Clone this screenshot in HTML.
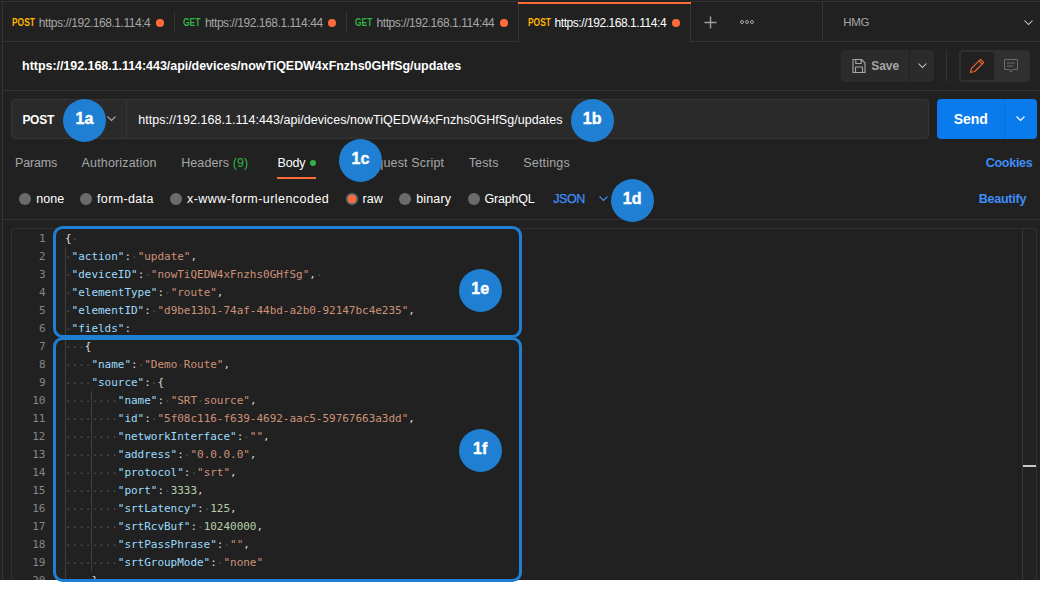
<!DOCTYPE html>
<html><head><meta charset="utf-8">
<style>
*{box-sizing:border-box;margin:0;padding:0}
html,body{width:1059px;height:600px;background:#fff;overflow:hidden}
body{font-family:"Liberation Sans",sans-serif;font-size:12px;color:#a6a6a6;position:relative}
#app{position:absolute;left:0;top:0;width:1040px;height:580px;background:#212121;overflow:hidden}
.abs{position:absolute}
.t{position:absolute;white-space:nowrap;line-height:16px}
.hl{position:absolute;height:1px;background:#343434}
.vl{position:absolute;width:1px;background:#343434}
/* tabs */
.tab{position:absolute;top:2px;height:39px}
.tab .m{position:absolute;top:14.5px;font-size:10px;font-weight:bold;line-height:12px;transform:scaleX(0.84);transform-origin:0 0}
.tab .u{position:absolute;top:13px;font-size:12px;line-height:16px;white-space:nowrap;letter-spacing:-0.45px}
.tab .d{position:absolute;top:17px;width:8px;height:8px;border-radius:50%;background:#ff6c37}
.post{color:#ffb400}.get{color:#2fb344}
.sep{position:absolute;top:11px;width:1px;height:21px;background:#343434}
.rt{font-size:12.5px;top:155px}
/* radios */
.r{position:absolute;top:193px;width:12px;height:12px;border-radius:50%;background:#6b6b6b}
.rl{position:absolute;top:191px;line-height:16px;color:#fff;font-size:12.5px;white-space:nowrap}
/* code */
#code{position:absolute;left:11px;top:228px;width:1026px;height:360px;border:1px solid #303030;border-radius:4px 4px 0 0;border-bottom:none}
.ln{position:absolute;left:0;top:0;width:33.5px;margin-top:1px;text-align:right;font:11px/18px "DejaVu Sans Mono","Liberation Mono",monospace;color:#858585}
.cl{position:absolute;left:53px;margin-top:1px;font:11px/18px "DejaVu Sans Mono","Liberation Mono",monospace;letter-spacing:-0.022px;color:#d4d4d4;white-space:pre}
.k{color:#9cdcfe}.s{color:#ce9178}.n{color:#b5cea8}.b{color:#dcdcdc}.w{color:#505050;position:relative;top:0.8px}
.box{position:absolute;border:3px solid #1f7fd3;border-radius:9.5px}
.c{position:absolute;width:43px;height:43px;border-radius:50%;background:#1f7fd3;color:#fff;font-weight:bold;font-size:16px;line-height:40.7px;text-align:center;-webkit-text-stroke:0.4px #fff}
</style></head><body>
<div id="app">
<!-- outer lines -->
<div class="hl" style="left:0;top:1px;width:1040px"></div>
<div class="vl" style="left:2px;top:2px;height:578px"></div>
<!-- tab bar -->
<div class="hl" style="left:3px;top:41px;width:1037px"></div>
<div class="tab" style="left:3px;width:171px"><span class="m post" style="left:8.6px">POST</span><span class="u" style="left:35.8px">https://192.168.1.114:4</span><span class="d" style="left:153px"></span></div>
<div class="sep" style="left:174px"></div>
<div class="tab" style="left:174px;width:172px"><span class="m get" style="left:9.3px">GET</span><span class="u" style="left:30.9px">https://192.168.1.114:44</span><span class="d" style="left:154px"></span></div>
<div class="sep" style="left:346px"></div>
<div class="tab" style="left:346px;width:172px"><span class="m get" style="left:9.3px">GET</span><span class="u" style="left:30.6px">https://192.168.1.114:44</span><span class="d" style="left:154px"></span></div>
<div class="abs" style="left:518px;top:1px;width:173px;height:41px;background:#212121;border-left:1px solid #343434;border-right:1px solid #343434"></div>
<div class="abs" style="left:518px;top:1.6px;width:173px;height:2.5px;background:#ff6c37"></div>
<div class="tab" style="left:518px;width:172px"><span class="m post" style="left:9.5px">POST</span><span class="u" style="left:36.6px;color:#fff">https://192.168.1.114:4</span><span class="d" style="left:154px"></span></div>
<svg class="abs" style="left:704px;top:16px" width="13" height="13" viewBox="0 0 13 13"><path d="M6.5 0.5v12M0.5 6.5h12" stroke="#a0a0a0" stroke-width="1.4" fill="none"/></svg>
<svg class="abs" style="left:739px;top:19px" width="16" height="6" viewBox="0 0 16 6"><g fill="none" stroke="#a6a6a6" stroke-width="1"><circle cx="3" cy="3" r="1.5"/><circle cx="8" cy="3" r="1.5"/><circle cx="13" cy="3" r="1.5"/></g></svg>
<div class="vl" style="left:822px;top:2px;height:39px"></div>
<div class="t" style="left:843.2px;top:14px;font-size:11.5px;letter-spacing:-0.33px;color:#a6a6a6">HMG</div>
<svg class="abs" style="left:1023px;top:19px" width="11" height="8" viewBox="0 0 11 8"><path d="M1.5 1.5l4 4 4-4" stroke="#d0d0d0" stroke-width="1.05" fill="none"/></svg>

<!-- title row -->
<div class="t" style="left:22.1px;top:58px;font-size:12.5px;font-weight:bold;color:#fff;letter-spacing:-0.048px">https://192.168.1.114:443/api/devices/nowTiQEDW4xFnzhs0GHfSg/updates</div>
<div class="abs" style="left:841px;top:50px;width:68px;height:32px;background:#2b2b2b;border-radius:4px 0 0 4px"></div>
<div class="abs" style="left:910px;top:50px;width:24px;height:32px;background:#2b2b2b;border-radius:0 4px 4px 0"></div>
<svg class="abs" style="left:851px;top:58px" width="16" height="16" viewBox="0 0 16 16"><path d="M2 1.5h8.5l3.5 3.5v9.500h-12z M4.800 1.5v4h5.400v-4 M4.500 14.500v-5.500h7v5.500" stroke="#a6a6a6" stroke-width="1.1" fill="none" stroke-linejoin="round"/></svg>
<div class="t" style="left:871.2px;top:58px;font-size:12px;font-weight:bold;color:#a6a6a6">Save</div>
<svg class="abs" style="left:917px;top:62px" width="11" height="8" viewBox="0 0 11 8"><path d="M1.5 1.5l4 4 4-4" stroke="#d0d0d0" stroke-width="1.05" fill="none"/></svg>
<div class="vl" style="left:946px;top:50px;height:32px"></div>
<div class="abs" style="left:959px;top:50px;width:71px;height:32px;background:#303030;border-radius:4px"></div>
<div class="abs" style="left:961px;top:52px;width:33px;height:28px;background:#212121;border-radius:3px"></div>
<svg class="abs" style="left:969px;top:58px" width="16" height="16" viewBox="0 0 16 16"><path d="M1.500 14.500l1-4.200 9-9 3.200 3.200 -9 9z M10 2.800l3.200 3.200" stroke="#e8642f" stroke-width="1.2" fill="none" stroke-linejoin="round"/></svg>
<svg class="abs" style="left:1003px;top:58px" width="16" height="16" viewBox="0 0 16 16"><path d="M1.500 1.500h13v10h-5l-1.500 2.500 -1.500 -2.500h-5z M4 5h8 M4 8h6" stroke="#6b6b6b" stroke-width="1" fill="none" stroke-linejoin="round"/></svg>
<div class="hl" style="left:3px;top:90px;width:1037px"></div>

<!-- url row -->
<div class="abs" style="left:11px;top:99px;width:918px;height:40px;background:#2a2a2a;border:1px solid #353535;border-radius:4px"></div>
<div class="vl" style="left:126px;top:100px;height:38px;background:#353535"></div>
<div class="t" style="left:22.4px;top:111.6px;font-size:12px;font-weight:bold;color:#fff;letter-spacing:-0.27px">POST</div>
<svg class="abs" style="left:106px;top:115px" width="11" height="8" viewBox="0 0 11 8"><path d="M1.500 1.500l4 4 4-4" stroke="#a6a6a6" stroke-width="1.100" fill="none"/></svg>
<div class="t" style="left:138.2px;top:111.5px;font-size:12.5px;color:#fff;letter-spacing:0.037px">https://192.168.1.114:443/api/devices/nowTiQEDW4xFnzhs0GHfSg/updates</div>
<div class="abs" style="left:937px;top:99px;width:100px;height:40px;background:#097bed;border-radius:4px"></div>
<div class="vl" style="left:1004px;top:99px;height:40px;background:#0a6fd4"></div>
<div class="t" style="left:953.7px;top:110px;font-size:14px;line-height:18px;font-weight:bold;color:#fff">Send</div>
<svg class="abs" style="left:1015px;top:115px" width="11" height="8" viewBox="0 0 11 8"><path d="M1.500 1.500l4 4 4-4" stroke="#fff" stroke-width="1.1" fill="none"/></svg>

<!-- request tabs -->
<div class="t rt" style="left:15px;letter-spacing:-0.18px">Params</div>
<div class="t rt" style="left:81.5px;letter-spacing:0.17px">Authorization</div>
<div class="t rt" style="left:181.2px;letter-spacing:0.09px">Headers <span style="color:#2fb344">(9)</span></div>
<div class="t rt" style="left:277.5px;color:#fff;letter-spacing:-0.125px">Body</div>
<div class="abs" style="left:310px;top:160px;width:6px;height:6px;border-radius:50%;background:#2fb344"></div>
<div class="abs" style="left:277px;top:176.500px;width:39px;height:2px;background:#ff6c37"></div>
<div class="t rt" style="left:340.7px;letter-spacing:0.154px">Pre-request Script</div>
<div class="t rt" style="left:468.7px;letter-spacing:0.16px">Tests</div>
<div class="t rt" style="left:523.2px;letter-spacing:0.2px">Settings</div>
<div class="t rt" style="left:985.7px;font-weight:bold;color:#3e8ef7;letter-spacing:-0.26px">Cookies</div>

<!-- body type row -->
<div class="r" style="left:19px"></div><div class="rl" style="left:36.2px;letter-spacing:0.05px">none</div>
<div class="r" style="left:80px"></div><div class="rl" style="left:97px;letter-spacing:0.356px">form-data</div>
<div class="r" style="left:170px"></div><div class="rl" style="left:187px;letter-spacing:0.453px">x-www-form-urlencoded</div>
<div class="r" style="left:345.500px;background:#ff6c37;border:2px solid #6b6b6b"></div><div class="rl" style="left:362.5px;letter-spacing:0.115px">raw</div>
<div class="r" style="left:399px"></div><div class="rl" style="left:416.2px;letter-spacing:0.16px">binary</div>
<div class="r" style="left:468px"></div><div class="rl" style="left:484.5px;letter-spacing:-0.2px">GraphQL</div>
<div class="rl" style="left:553.2px;color:#3e8ef7;letter-spacing:-0.386px;-webkit-text-stroke:0.25px #3e8ef7">JSON</div>
<svg class="abs" style="left:598px;top:194.500px" width="11" height="8" viewBox="0 0 11 8"><path d="M1.500 1.500l4 4 4-4" stroke="#3e8ef7" stroke-width="1.100" fill="none"/></svg>
<div class="rl" style="left:978.7px;font-weight:bold;color:#3e8ef7;letter-spacing:-0.23px">Beautify</div>
<div class="hl" style="left:3px;top:219px;width:1037px"></div>

<!-- code -->
<div id="code">
<div class="vl" style="left:1010px;top:0;height:360px;background:#3a3a3a"></div>
<div class="abs" style="left:1011px;top:236px;width:13px;height:2px;background:#c8c8c8"></div>
<div class="vl" style="left:53px;top:18px;height:342px;background:#404040"></div>
<div class="vl" style="left:79px;top:162px;height:180px;background:#404040"></div>
<div class="ln" style="top:0px">1</div><div class="cl" style="top:0px"><span class="b">{</span><span class="w">·</span></div>
<div class="ln" style="top:18px">2</div><div class="cl" style="top:18px"><span class="w">·</span><span class="k">"action"</span>:<span class="w">·</span><span class="s">"update"</span>,</div>
<div class="ln" style="top:36px">3</div><div class="cl" style="top:36px"><span class="w">·</span><span class="k">"deviceID"</span>:<span class="w">·</span><span class="s">"nowTiQEDW4xFnzhs0GHfSg"</span>,<span class="w">·</span></div>
<div class="ln" style="top:54px">4</div><div class="cl" style="top:54px"><span class="w">·</span><span class="k">"elementType"</span>:<span class="w">·</span><span class="s">"route"</span>,</div>
<div class="ln" style="top:72px">5</div><div class="cl" style="top:72px"><span class="w">·</span><span class="k">"elementID"</span>:<span class="w">·</span><span class="s">"d9be13b1-74af-44bd-a2b0-92147bc4e235"</span>,</div>
<div class="ln" style="top:90px">6</div><div class="cl" style="top:90px"><span class="w">·</span><span class="k">"fields"</span>:</div>
<div class="ln" style="top:108px">7</div><div class="cl" style="top:108px"><span class="w">···</span><span class="b">{</span></div>
<div class="ln" style="top:126px">8</div><div class="cl" style="top:126px"><span class="w">····</span><span class="k">"name"</span>:<span class="w">·</span><span class="s">"Demo<span class="w">·</span>Route"</span>,</div>
<div class="ln" style="top:144px">9</div><div class="cl" style="top:144px"><span class="w">····</span><span class="k">"source"</span>:<span class="w">·</span>{</div>
<div class="ln" style="top:162px">10</div><div class="cl" style="top:162px"><span class="w">········</span><span class="k">"name"</span>:<span class="w">·</span><span class="s">"SRT<span class="w">·</span>source"</span>,</div>
<div class="ln" style="top:180px">11</div><div class="cl" style="top:180px"><span class="w">········</span><span class="k">"id"</span>:<span class="w">·</span><span class="s">"5f08c116-f639-4692-aac5-59767663a3dd"</span>,</div>
<div class="ln" style="top:198px">12</div><div class="cl" style="top:198px"><span class="w">········</span><span class="k">"networkInterface"</span>:<span class="w">·</span><span class="s">""</span>,</div>
<div class="ln" style="top:216px">13</div><div class="cl" style="top:216px"><span class="w">········</span><span class="k">"address"</span>:<span class="w">·</span><span class="s">"0.0.0.0"</span>,</div>
<div class="ln" style="top:234px">14</div><div class="cl" style="top:234px"><span class="w">········</span><span class="k">"protocol"</span>:<span class="w">·</span><span class="s">"srt"</span>,</div>
<div class="ln" style="top:252px">15</div><div class="cl" style="top:252px"><span class="w">········</span><span class="k">"port"</span>:<span class="w">·</span><span class="n">3333</span>,</div>
<div class="ln" style="top:270px">16</div><div class="cl" style="top:270px"><span class="w">········</span><span class="k">"srtLatency"</span>:<span class="w">·</span><span class="n">125</span>,</div>
<div class="ln" style="top:288px">17</div><div class="cl" style="top:288px"><span class="w">········</span><span class="k">"srtRcvBuf"</span>:<span class="w">·</span><span class="n">10240000</span>,</div>
<div class="ln" style="top:306px">18</div><div class="cl" style="top:306px"><span class="w">········</span><span class="k">"srtPassPhrase"</span>:<span class="w">·</span><span class="s">""</span>,</div>
<div class="ln" style="top:324px">19</div><div class="cl" style="top:324px"><span class="w">········</span><span class="k">"srtGroupMode"</span>:<span class="w">·</span><span class="s">"none"</span></div>
<div class="ln" style="top:342px">20</div><div class="cl" style="top:342px"><span class="w">····</span><span class="b">}</span></div>
</div>
</div>
<!-- annotations -->
<div class="box" style="left:53px;top:225.500px;width:469px;height:112px"></div>
<div class="box" style="left:53px;top:336.500px;width:469px;height:245px"></div>
<div class="c" style="left:63px;top:98.800px">1a</div>
<div class="c" style="left:570.700px;top:98.800px">1b</div>
<div class="c" style="left:339px;top:138.800px">1c</div>
<div class="c" style="left:610.700px;top:178.600px">1d</div>
<div class="c" style="left:458.700px;top:269.100px">1e</div>
<div class="c" style="left:458.700px;top:428.900px">1f</div>
</body></html>
